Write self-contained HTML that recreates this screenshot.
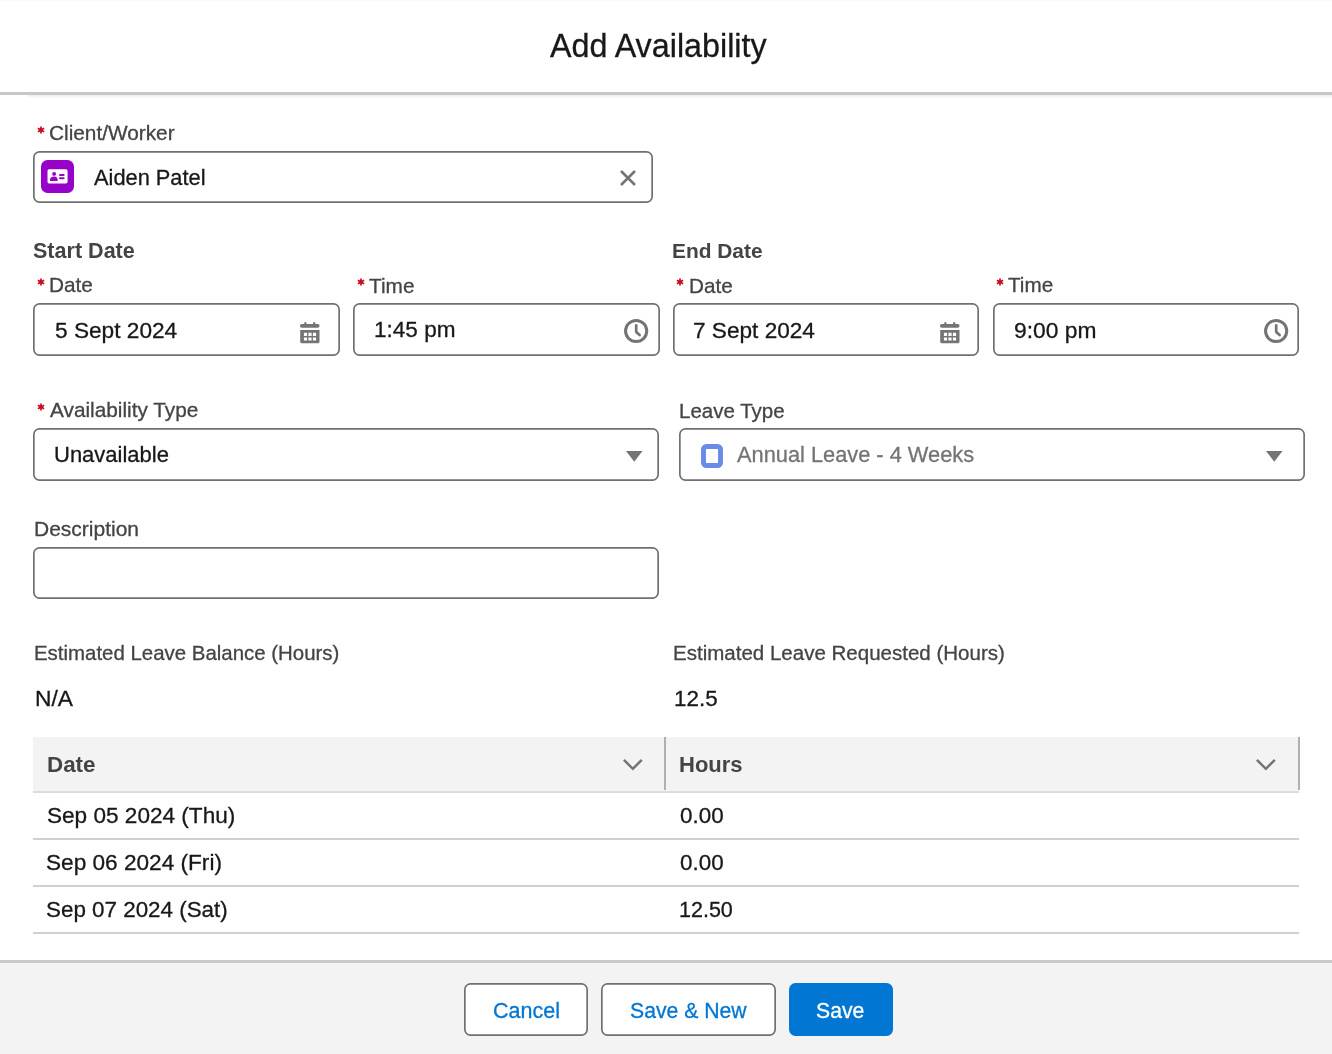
<!DOCTYPE html>
<html><head><meta charset="utf-8">
<style>
html,body{margin:0;padding:0;}
body{width:1332px;height:1054px;position:relative;overflow:hidden;background:#fff;font-family:"Liberation Sans",sans-serif;color:#181818;}
.t{position:absolute;white-space:nowrap;line-height:1;margin:0;will-change:transform;-webkit-text-stroke:0.3px currentColor;}
.box{position:absolute;box-sizing:border-box;border-radius:6.5px;background:#fff;box-shadow:inset 0 0 0 1.7px #707070;}
.ln{position:absolute;}
svg{position:absolute;overflow:visible;}
</style></head>
<body>
<div class="ln" style="left:0;top:0;width:1332px;height:1px;background:#f9f9f9;"></div>
<div class="ln" style="left:0;top:92px;width:1332px;height:3px;background:#c7c7c7;"></div>
<div class="ln" style="left:28px;top:95px;width:1304px;height:3px;background:linear-gradient(#ededed,#fafafa);border-bottom-left-radius:3px;"></div>
<svg style="left:37.05px;top:125.6px" width="8" height="8" viewBox="-4 -4 8 8"><path d="M0 -3.6V3.6M-3.12 -1.8L3.12 1.8M-3.12 1.8L3.12 -1.8" stroke="#c80a1e" stroke-width="1.7"/></svg>
<div class="box" style="left:33.3px;top:150.5px;width:619.50px;height:52.50px;"></div>
<svg style="left:41.4px;top:160px" width="33" height="33" viewBox="0 0 33 33"><rect x="0" y="0" width="33" height="33" rx="6.5" fill="#9602c7"/><rect x="6.5" y="9.3" width="20.1" height="14.1" rx="1.6" fill="#fff"/><circle cx="13.1" cy="13.9" r="1.95" fill="#9602c7"/><path d="M9 21.1v-1.6c0-1.8 1.6-3.1 4.1-3.1s3.5 1.3 3.5 3.1v1.6z" fill="#9602c7"/><rect x="18" y="13.9" width="5.6" height="2" rx="1" fill="#9602c7"/><rect x="18" y="17.3" width="5.6" height="2" rx="1" fill="#9602c7"/></svg>
<svg style="left:620.2px;top:169.5px" width="16" height="16" viewBox="0 0 16 16"><path d="M1 1L15 15M15 1L1 15" stroke="#747474" stroke-width="2.6"/></svg>
<svg style="left:37.35px;top:278.20000000000005px" width="8" height="8" viewBox="-4 -4 8 8"><path d="M0 -3.6V3.6M-3.12 -1.8L3.12 1.8M-3.12 1.8L3.12 -1.8" stroke="#c80a1e" stroke-width="1.7"/></svg>
<svg style="left:356.84999999999997px;top:278.20000000000005px" width="8" height="8" viewBox="-4 -4 8 8"><path d="M0 -3.6V3.6M-3.12 -1.8L3.12 1.8M-3.12 1.8L3.12 -1.8" stroke="#c80a1e" stroke-width="1.7"/></svg>
<svg style="left:676.4499999999999px;top:278.20000000000005px" width="8" height="8" viewBox="-4 -4 8 8"><path d="M0 -3.6V3.6M-3.12 -1.8L3.12 1.8M-3.12 1.8L3.12 -1.8" stroke="#c80a1e" stroke-width="1.7"/></svg>
<svg style="left:996.4499999999999px;top:278.20000000000005px" width="8" height="8" viewBox="-4 -4 8 8"><path d="M0 -3.6V3.6M-3.12 -1.8L3.12 1.8M-3.12 1.8L3.12 -1.8" stroke="#c80a1e" stroke-width="1.7"/></svg>
<div class="box" style="left:33.3px;top:303.3px;width:306.50px;height:52.50px;"></div>
<div class="box" style="left:353.1px;top:303.3px;width:306.50px;height:52.50px;"></div>
<div class="box" style="left:672.6px;top:303.3px;width:306.50px;height:52.50px;"></div>
<div class="box" style="left:992.5px;top:303.3px;width:306.50px;height:52.50px;"></div>
<svg style="left:300.3px;top:322.2px" width="20" height="22" viewBox="0 0 20 22"><rect x="0" y="2.1" width="19.5" height="3.6" rx="1.6" fill="#747474"/><path d="M4.3 2.6V1.2a1.1 1.1 0 0 1 2.2 0V2.6z M13.1 2.6V1.2a1.1 1.1 0 0 1 2.2 0V2.6z" fill="#747474"/><path fill-rule="evenodd" fill="#747474" d="M0.2 8.1h19.3v11.7a1.4 1.4 0 0 1 -1.4 1.4h-16.5a1.4 1.4 0 0 1 -1.4 -1.4z M3.9 10.7h3.2v3.2h-3.2z M8.4 10.7h3.2v3.2h-3.2z M12.9 10.7h3.2v3.2h-3.2z M3.9 15.4h3.2v3.2h-3.2z M8.4 15.4h3.2v3.2h-3.2z M12.9 15.4h3.2v3.2h-3.2z"/></svg>
<svg style="left:939.6px;top:322.2px" width="20" height="22" viewBox="0 0 20 22"><rect x="0" y="2.1" width="19.5" height="3.6" rx="1.6" fill="#747474"/><path d="M4.3 2.6V1.2a1.1 1.1 0 0 1 2.2 0V2.6z M13.1 2.6V1.2a1.1 1.1 0 0 1 2.2 0V2.6z" fill="#747474"/><path fill-rule="evenodd" fill="#747474" d="M0.2 8.1h19.3v11.7a1.4 1.4 0 0 1 -1.4 1.4h-16.5a1.4 1.4 0 0 1 -1.4 -1.4z M3.9 10.7h3.2v3.2h-3.2z M8.4 10.7h3.2v3.2h-3.2z M12.9 10.7h3.2v3.2h-3.2z M3.9 15.4h3.2v3.2h-3.2z M8.4 15.4h3.2v3.2h-3.2z M12.9 15.4h3.2v3.2h-3.2z"/></svg>
<svg style="left:624.3px;top:319.1px" width="24.3" height="24" viewBox="0 0 24.3 24"><circle cx="12.15" cy="12" r="10.6" fill="none" stroke="#747474" stroke-width="3"/><path d="M12.2 6.4V13.1L15.6 16.1" fill="none" stroke="#747474" stroke-width="2.7" stroke-linecap="round" stroke-linejoin="round"/></svg>
<svg style="left:1263.7px;top:319.1px" width="24.3" height="24" viewBox="0 0 24.3 24"><circle cx="12.15" cy="12" r="10.6" fill="none" stroke="#747474" stroke-width="3"/><path d="M12.2 6.4V13.1L15.6 16.1" fill="none" stroke="#747474" stroke-width="2.7" stroke-linecap="round" stroke-linejoin="round"/></svg>
<svg style="left:37.449999999999996px;top:402.90000000000003px" width="8" height="8" viewBox="-4 -4 8 8"><path d="M0 -3.6V3.6M-3.12 -1.8L3.12 1.8M-3.12 1.8L3.12 -1.8" stroke="#c80a1e" stroke-width="1.7"/></svg>
<div class="box" style="left:33.3px;top:428.2px;width:626.10px;height:52.60px;"></div>
<div class="box" style="left:679.3px;top:428.2px;width:626.20px;height:52.60px;"></div>
<svg style="left:626.4px;top:450.7px" width="16.5" height="10.8" viewBox="0 0 16.5 10.8"><path d="M0 0H16.5L8.25 10.8z" fill="#747474"/></svg>
<svg style="left:1266px;top:450.7px" width="16.5" height="10.8" viewBox="0 0 16.5 10.8"><path d="M0 0H16.5L8.25 10.8z" fill="#747474"/></svg>
<div style="position:absolute;left:700.6px;top:443.9px;width:22.8px;height:24.4px;box-sizing:border-box;border:5px solid #6a8be8;border-radius:5.5px;"></div>
<div class="box" style="left:33.3px;top:546.5px;width:626.10px;height:52.50px;"></div>
<div class="ln" style="left:33px;top:737px;width:1266px;height:54.5px;background:#f3f3f3;"></div>
<div class="ln" style="left:33px;top:791.3px;width:1266px;height:1.7px;background:#dddddd;"></div>
<div class="ln" style="left:664.2px;top:737.1px;width:1.9px;height:52.6px;background:#b0b0b0;"></div>
<div class="ln" style="left:1297.9px;top:737px;width:1.9px;height:53px;background:#b0b0b0;"></div>
<svg style="left:623.3px;top:758.9px" width="19.7" height="11.6" viewBox="0 0 19.7 11.6"><path d="M0.9 0.9L9.85 9.8L18.8 0.9" fill="none" stroke="#747474" stroke-width="2.5"/></svg>
<svg style="left:1256.3px;top:758.8px" width="19.7" height="11.6" viewBox="0 0 19.7 11.6"><path d="M0.9 0.9L9.85 9.8L18.8 0.9" fill="none" stroke="#747474" stroke-width="2.5"/></svg>
<div class="ln" style="left:33px;top:838.3px;width:1266px;height:1.5px;background:#d0d0d0;"></div>
<div class="ln" style="left:33px;top:885.0px;width:1266px;height:1.5px;background:#d0d0d0;"></div>
<div class="ln" style="left:33px;top:932.0px;width:1266px;height:1.5px;background:#d0d0d0;"></div>
<div class="ln" style="left:0;top:960px;width:1332px;height:3px;background:#c9c9c9;"></div>
<div class="ln" style="left:0;top:963px;width:1332px;height:91px;background:#f3f3f3;"></div>
<div class="box" style="left:464px;top:983px;width:123.90px;height:52.70px;"></div>
<div class="box" style="left:600.9px;top:983px;width:174.90px;height:52.70px;"></div>
<div style="position:absolute;left:789.2px;top:983px;width:103.8px;height:52.7px;background:#0176d3;border-radius:6.5px;"></div>
<div class="t" id="title" style="left:549.55px;top:30.17px;font-size:32.30px;font-weight:400;color:#181818;">Add Availability</div>
<div class="t" id="l_client" style="left:48.85px;top:123.00px;font-size:20.80px;font-weight:400;color:#444444;">Client/Worker</div>
<div class="t" id="v_client" style="left:94.15px;top:166.56px;font-size:21.80px;font-weight:400;color:#181818;">Aiden Patel</div>
<div class="t" id="h_start" style="left:33.30px;top:240.18px;font-size:21.56px;font-weight:700;color:#444444;-webkit-text-stroke:0;">Start Date</div>
<div class="t" id="h_end" style="left:671.85px;top:240.88px;font-size:20.90px;font-weight:700;color:#444444;-webkit-text-stroke:0;">End Date</div>
<div class="t" id="l_d1" style="left:49.30px;top:275.16px;font-size:20.80px;font-weight:400;color:#444444;">Date</div>
<div class="t" id="l_t1" style="left:368.80px;top:276.26px;font-size:20.80px;font-weight:400;color:#444444;">Time</div>
<div class="t" id="l_d2" style="left:688.90px;top:276.26px;font-size:20.70px;font-weight:400;color:#444444;">Date</div>
<div class="t" id="l_t2" style="left:1008.30px;top:275.16px;font-size:20.70px;font-weight:400;color:#444444;">Time</div>
<div class="t" id="v_d1" style="left:55.10px;top:318.95px;font-size:22.66px;font-weight:400;color:#181818;">5 Sept 2024</div>
<div class="t" id="v_t1" style="left:373.80px;top:318.72px;font-size:22.55px;font-weight:400;color:#181818;">1:45 pm</div>
<div class="t" id="v_d2" style="left:693.15px;top:319.95px;font-size:22.61px;font-weight:400;color:#181818;">7 Sept 2024</div>
<div class="t" id="v_t2" style="left:1014.25px;top:318.92px;font-size:22.80px;font-weight:400;color:#181818;">9:00 pm</div>
<div class="t" id="l_avail" style="left:49.55px;top:399.90px;font-size:20.80px;font-weight:400;color:#444444;">Availability Type</div>
<div class="t" id="l_leave" style="left:678.70px;top:401.46px;font-size:20.50px;font-weight:400;color:#444444;">Leave Type</div>
<div class="t" id="v_avail" style="left:53.95px;top:443.69px;font-size:22.00px;font-weight:400;color:#181818;">Unavailable</div>
<div class="t" id="v_leave" style="left:737.35px;top:443.77px;font-size:21.80px;font-weight:400;color:#747474;">Annual Leave - 4 Weeks</div>
<div class="t" id="l_desc" style="left:33.70px;top:518.46px;font-size:21.00px;font-weight:400;color:#444444;">Description</div>
<div class="t" id="l_bal" style="left:33.85px;top:643.06px;font-size:20.43px;font-weight:400;color:#444444;">Estimated Leave Balance (Hours)</div>
<div class="t" id="l_req" style="left:672.55px;top:643.16px;font-size:20.53px;font-weight:400;color:#444444;">Estimated Leave Requested (Hours)</div>
<div class="t" id="v_bal" style="left:34.80px;top:686.57px;font-size:22.80px;font-weight:400;color:#181818;">N/A</div>
<div class="t" id="v_req" style="left:673.70px;top:687.75px;font-size:22.40px;font-weight:400;color:#181818;">12.5</div>
<div class="t" id="th_date" style="left:46.95px;top:754.05px;font-size:22.40px;font-weight:700;color:#444444;-webkit-text-stroke:0;">Date</div>
<div class="t" id="th_hours" style="left:679.20px;top:753.59px;font-size:22.00px;font-weight:700;color:#444444;-webkit-text-stroke:0;">Hours</div>
<div class="t" id="r1d" style="left:46.75px;top:804.55px;font-size:22.58px;font-weight:400;color:#181818;">Sep 05 2024 (Thu)</div>
<div class="t" id="r2d" style="left:45.55px;top:852.35px;font-size:22.62px;font-weight:400;color:#181818;">Sep 06 2024 (Fri)</div>
<div class="t" id="r3d" style="left:46.10px;top:899.05px;font-size:22.40px;font-weight:400;color:#181818;">Sep 07 2024 (Sat)</div>
<div class="t" id="r1h" style="left:680.15px;top:805.15px;font-size:22.40px;font-weight:400;color:#181818;">0.00</div>
<div class="t" id="r2h" style="left:680.15px;top:852.15px;font-size:22.40px;font-weight:400;color:#181818;">0.00</div>
<div class="t" id="r3h" style="left:679.20px;top:899.99px;font-size:21.50px;font-weight:400;color:#181818;">12.50</div>
<div class="t" id="b_cancel" style="left:492.80px;top:1000.66px;font-size:21.50px;font-weight:400;color:#0176d3;">Cancel</div>
<div class="t" id="b_savenew" style="left:629.85px;top:999.66px;font-size:21.20px;font-weight:400;color:#0176d3;">Save &amp; New</div>
<div class="t" id="b_save" style="left:816.40px;top:999.66px;font-size:21.20px;font-weight:400;color:#ffffff;">Save</div>
</body></html>
